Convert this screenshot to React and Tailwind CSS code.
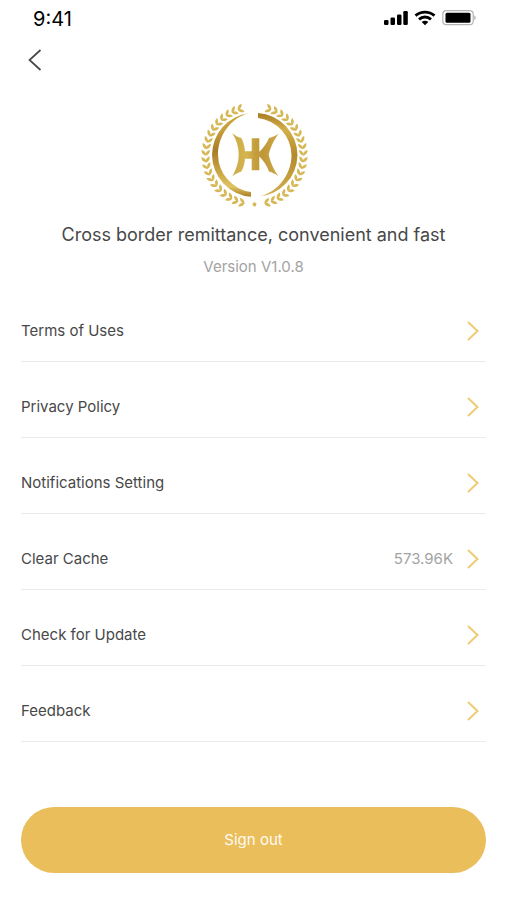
import React from "react";

const items = [
  { label: "Terms of Uses" },
  { label: "Privacy Policy" },
  { label: "Notifications Setting" },
  { label: "Clear Cache", value: "573.96K" },
  { label: "Check for Update" },
  { label: "Feedback" },
];

const leafAngles = Array.from({ length: 20 }, (_, i) => 12 + i * 7.8);

function Branch() {
  return leafAngles.map((angle) => (
    <path
      key={angle}
      transform={`rotate(${angle} 64.5 60.5) translate(64.5 109.3)`}
      d="M0.300 0C-0.500 -3 -2.600 -4.300 -5.400 -4.200C-5 -2 -3.600 -0.500 -1.800 0C-3.600 0.500 -5 2 -5.400 4.200C-2.600 4.300 -0.500 3 0.300 0Z"
    />
  ));
}

function Logo() {
  return (
    <svg viewBox="-1 0 130 120" className="h-[120px] w-[130px]" role="img" aria-label="HK">
      <defs>
        <linearGradient id="ringLeft" x1="0.500" y1="0" x2="0.500" y2="1">
          <stop offset="0" stopColor="#c9a644" />
          <stop offset="0.2" stopColor="#c9a03a" />
          <stop offset="0.45" stopColor="#a87c28" />
          <stop offset="0.75" stopColor="#d0ad48" />
          <stop offset="0.88" stopColor="#dfc362" />
          <stop offset="1" stopColor="#a87b25" />
        </linearGradient>
        <linearGradient id="ringRight" x1="0.500" y1="0" x2="0.500" y2="1">
          <stop offset="0" stopColor="#a97b24" />
          <stop offset="0.2" stopColor="#d4b04a" />
          <stop offset="0.5" stopColor="#b58a2c" />
          <stop offset="1" stopColor="#d2b04e" />
        </linearGradient>
        <linearGradient id="letters" x1="0" y1="0" x2="1" y2="0">
          <stop offset="0" stopColor="#cba945" />
          <stop offset="0.3" stopColor="#d6b650" />
          <stop offset="0.5" stopColor="#c49d3c" />
          <stop offset="0.65" stopColor="#c09738" />
          <stop offset="1" stopColor="#ccaa48" />
        </linearGradient>
      </defs>
      <g fill="#d6b856">
        <Branch />
        <g transform="matrix(-1 0 0 1 129 0)">
          <Branch />
        </g>
        <path d="M64.500 107L66.500 108.800L65.800 111.200H63.200L62.500 108.800Z" />
      </g>
      <path fill="url(#ringLeft)" d="M59 18A42.500 42.500 0 0 0 22 60A42.500 42.500 0 0 0 61 101.800V97A38 38 0 0 1 28 60C28 40 41 23 59 18Z" />
      <path fill="url(#ringRight)" d="M68 18A42.500 42.500 0 0 1 107.500 60A42.500 42.500 0 0 1 68 101.800C87 98 101.500 80 101.500 60A38 38 0 0 0 68 23Z" />
      <path
        fill="url(#letters)"
        d="M42.300 38.300C45 40.500 48 42.200 51.300 43C53.500 47 54.600 51 55 56.300H61.700V43.200H69.300V56.800C73.500 53 77 48 79 43C82.500 42 86 40.500 88.700 38.700C84.500 44 80.500 52 78.700 59.700C80.500 68 84.500 76 88.700 81.300C86 79.300 82 77.300 79 76.500C77 71 73.500 65.500 69.300 61.600V75.200H61.700V63.700H55C54.600 69 53.500 73 51.300 76.500C48 77.500 45 79.300 42.300 81.300C46.500 74 48.700 67 48.700 59.700C48.700 52 46.500 45 42.300 38.300Z"
      />
    </svg>
  );
}

function Chevron() {
  return (
    <svg viewBox="0 0 12 20" className="h-5 w-3" fill="none" stroke="#efcb74" strokeWidth="2" aria-hidden="true">
      <path d="M1 1L10.500 10L1 19" />
    </svg>
  );
}

function StatusIcons() {
  return (
    <div className="flex items-center gap-[6px]" aria-hidden="true">
      <svg viewBox="0 0 24 16" className="h-4 w-6" fill="#000">
        <rect x="0" y="10" width="4.500" height="5" rx="1.200" />
        <rect x="6.500" y="7.500" width="4.500" height="7.500" rx="1.200" />
        <rect x="13" y="4.500" width="4.500" height="10.500" rx="1.200" />
        <rect x="19.300" y="1" width="4.500" height="14" rx="1.200" />
      </svg>
      <svg viewBox="0 0 22 16" className="h-4 w-[22px]" fill="none" stroke="#000" strokeWidth="2.800">
        <path d="M1.500 5.600C7 0.900 15 0.900 20.500 5.600" />
        <path d="M5 9.400C8.500 6.200 13.500 6.200 17 9.400" />
        <path d="M11 15.200L7.700 12C9.600 10.400 12.400 10.400 14.300 12Z" fill="#000" stroke="none" />
      </svg>
      <svg viewBox="0 0 34 16" className="h-4 w-[34px]">
        <rect x="0.800" y="0.700" width="30.400" height="14" rx="3.500" fill="#fff" stroke="#b5b5b5" strokeWidth="1.200" />
        <rect x="3.500" y="2.700" width="25" height="10" rx="1.500" fill="#000" />
        <path d="M32.300 5.500V10C34 9.500 34 6 32.300 5.500Z" fill="#a5a5a5" />
      </svg>
    </div>
  );
}

export default function App() {
  return (
    <main className="flex min-h-screen flex-col bg-white font-['Inter','Liberation_Sans',sans-serif] text-[#484848]">
      <header>
        <div className="flex h-9 items-center justify-between pr-[31px] pl-[33px]">
          <time className="pt-[2px] text-xl text-black">9:41</time>
          <StatusIcons />
        </div>
        <button type="button" aria-label="Back" className="flex h-12 w-14 items-center pl-7">
          <svg viewBox="0 0 14 22" className="h-[22px] w-[14px]" fill="none" stroke="#484848" strokeWidth="1.700">
            <path d="M12.500 1L1.500 11L12.500 21" />
          </svg>
        </button>
      </header>

      <section className="flex flex-col items-center pt-[11px]">
        <Logo />
        <h1 className="mt-2 text-lg leading-6">Cross border remittance, convenient and fast</h1>
        <p className="mt-2 text-[15px] leading-6 text-[#a3a3a3]">Version V1.0.8</p>
      </section>

      <ul className="mx-[21px] mt-[7px]">
        {items.map(({ label, value }) => (
          <li key={label} className="border-b border-[#ebebeb]">
            <button type="button" className="flex w-full items-center pt-[33px] pr-[7px] pb-[18px] text-[15px] leading-6">
              <span>{label}</span>
              <span className="mr-[14px] ml-auto text-[#a3a3a3]">{value}</span>
              <Chevron />
            </button>
          </li>
        ))}
      </ul>

      <button type="button" className="mx-[21px] mt-[65px] h-[66px] rounded-full bg-[#ebbe5c] text-[15px] text-[#fffaf0]">
        Sign out
      </button>
    </main>
  );
}
